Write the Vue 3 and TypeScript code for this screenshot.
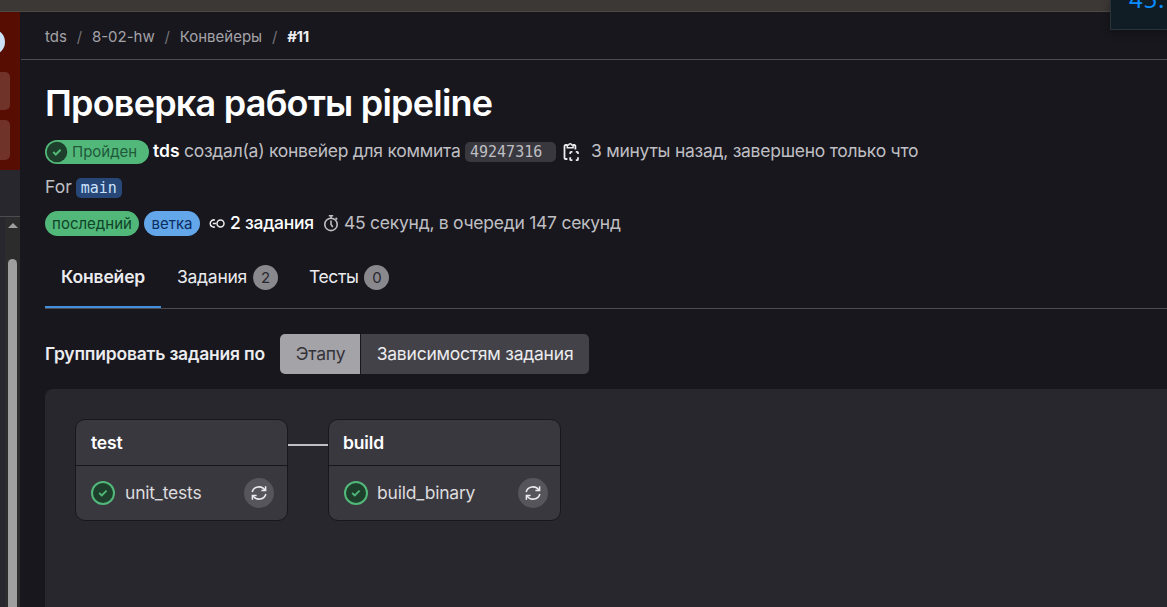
<script setup lang="ts">
interface Stage {
  name: string
  job: string
  width: number
}

const crumbs: string[] = ['tds', '8-02-hw', 'Конвейеры']
const tabs = [
  { label: 'Задания', count: 2 },
  { label: 'Тесты', count: 0 },
]
const stages: Stage[] = [
  { name: 'test', job: 'unit_tests', width: 213 },
  { name: 'build', job: 'build_binary', width: 233 },
]
</script>

<template>
  <div class="window">
    <div class="chrome"></div>
    <div class="floating">45.</div>
    <div class="body">
      <aside class="sidebar">
        <div class="brand">
          <span class="avatar"></span>
          <span class="tile"></span>
          <span class="tile"></span>
        </div>
        <div class="context"></div>
        <div class="scroll">
          <div class="track">
            <span class="arrow"></span>
            <span class="thumb"></span>
          </div>
        </div>
      </aside>
      <main class="main">
        <nav class="crumbs">
          <template v-for="crumb in crumbs" :key="crumb">
            <a>{{ crumb }}</a><span class="slash">/</span>
          </template>
          <b>#11</b>
        </nav>
        <div class="content">
          <h1>Проверка работы pipeline</h1>
          <div class="row summary">
            <span class="status">
              <svg width="24" height="24" viewBox="0 0 24 24">
                <circle cx="12" cy="12" r="10.3" fill="#1d3f2b" />
                <path d="M8.2 12l2.6 2.5 4.8-4.8" fill="none" stroke="#52b87a" stroke-width="2" />
              </svg>
              <span class="status-text">Пройден</span>
            </span>
            <b class="author">tds</b>
            <span class="created">создал(а) конвейер для коммита</span>
            <code class="sha">49247316</code>
            <svg class="copy" width="20" height="20" viewBox="0 0 20 20" fill="none" stroke="#ececef" stroke-width="1.8">
              <path d="M6.4 17H4.6a1.1 1.1 0 0 1-1.1-1.1V4.1A1.1 1.1 0 0 1 4.6 3H6M12 3h1.3a1.1 1.1 0 0 1 1.1 1.1v3.4" />
              <path d="M6.3 5.8V3.1h1.3a1.65 1.65 0 0 1 3.2 0h1.3v2.7z" stroke-width="1.5" />
              <path d="M11.4 9.9h-1.2a1 1 0 0 0-1 1v1.2M14.8 9.9H16a1 1 0 0 1 1 1v1.2M9.2 15.3v1.9a1 1 0 0 0 1 1h1.2M17 15.3v1.9a1 1 0 0 1-1 1h-1.2" />
            </svg>
            <span class="ago">3 минуты назад, завершено только что</span>
          </div>
          <div class="row ref"><span>For</span><code class="branch">main</code></div>
          <div class="row badges">
            <span class="badge latest">последний</span>
            <span class="badge kind">ветка</span>
            <svg class="jobs-icon" width="18" height="16" viewBox="0 0 18 16" fill="none" stroke="#ececef" stroke-width="1.5">
              <path d="M7 5.1A3.6 3.6 0 1 0 7 11.9M8.2 8.5H4.8" />
              <circle cx="12.5" cy="8.5" r="3.5" />
            </svg>
            <span class="jobs">2 задания</span>
            <svg class="timer" width="16" height="18" viewBox="0 0 16 18" fill="none" stroke="#bfbfc3" stroke-width="1.6">
              <circle cx="8" cy="10.4" r="6.2" />
              <path d="M8 6.6V10.4l1.8 2.6M5.8 1.8h4.4M8 1.8v2.4M12.6 3.9l1.6 1.6" />
            </svg>
            <span class="duration">45 секунд, в очереди 147 секунд</span>
          </div>
          <div class="tabs">
            <div class="tab active"><span>Конвейер</span></div>
            <div v-for="tab in tabs" :key="tab.label" class="tab">
              <span>{{ tab.label }}</span><span class="count">{{ tab.count }}</span>
            </div>
          </div>
          <div class="grouping">
            <b>Группировать задания по</b>
            <div class="segmented">
              <button class="selected"><span>Этапу</span></button>
              <button><span>Зависимостям задания</span></button>
            </div>
          </div>
          <section class="graph">
            <template v-for="(stage, i) in stages" :key="stage.name">
              <span v-if="i > 0" class="link"></span>
              <article class="stage" :style="{ width: stage.width + 'px' }">
                <header>{{ stage.name }}</header>
                <div class="job">
                  <svg width="24" height="24" viewBox="0 0 24 24" fill="none" stroke="#52b87a">
                    <circle cx="12" cy="12" r="11" fill="#1d3f2b" stroke-width="2" />
                    <path d="M8.2 12l2.6 2.5 4.8-4.8" stroke-width="1.8" />
                  </svg>
                  <span class="job-name">{{ stage.job }}</span>
                  <span class="retry">
                    <svg width="16" height="16" viewBox="0 0 16 16" fill="none" stroke="#ececef" stroke-width="1.5">
                      <path d="M1.2 7A6.8 6.2 0 0 1 13.9 5.2M14.8 9A6.8 6.2 0 0 1 2.1 10.8" />
                      <path d="M14.6 1.2v4.2h-4.2M1.4 14.8v-4.2h4.2" />
                    </svg>
                  </span>
                </div>
              </article>
            </template>
          </section>
        </div>
      </main>
    </div>
  </div>
</template>

<style>
body {
  background: #18171d;
  overflow: hidden;
}
</style>

<style scoped>
* {
  box-sizing: border-box;
}
.window {
  position: relative;
  display: flex;
  flex-direction: column;
  width: 1167px;
  height: 607px;
  overflow: hidden;
  background: #18171d;
  color: #bfbfc3;
  font: 17.5px/24px Inter, "Noto Sans", sans-serif;
  letter-spacing: -0.26px;
  white-space: nowrap;
}
svg {
  display: block;
  flex: none;
}
.chrome {
  flex: none;
  height: 12px;
  background: #3c3836;
  border-bottom: 1px solid #504843;
}
.floating {
  position: absolute;
  z-index: 2;
  top: -2px;
  right: -2px;
  width: 59px;
  height: 32px;
  padding-left: 18px;
  background: #111d24;
  border: 1px solid #29333a;
  color: #0a8cff;
  font: 24px/0px "Noto Sans", sans-serif;
  letter-spacing: 0.8px;
  box-shadow: 0 2px 8px rgba(0, 0, 0, 0.35);
}
.body {
  display: flex;
  flex: 1;
  min-height: 0;
}
.sidebar {
  display: flex;
  flex-direction: column;
  width: 20px;
  flex: none;
  overflow: hidden;
  background: #28272d;
}
.brand {
  display: flex;
  flex-direction: column;
  height: 158px;
  padding-top: 17px;
  background: #580d02;
}
.avatar {
  width: 26px;
  height: 26px;
  margin-left: -21px;
  border-radius: 50%;
  background: #cbe2f9;
}
.tile {
  width: 20px;
  height: 38px;
  margin: 17px 0 0 -10px;
  border-radius: 5px;
  background: #70332a;
}
.tile + .tile {
  margin-top: 10px;
  height: 40px;
}
.context {
  height: 47px;
  border-bottom: 1px solid #4c4b51;
}
.scroll {
  display: flex;
  flex: 1;
  padding-left: 5px;
}
.track {
  display: flex;
  flex-direction: column;
  align-items: center;
  width: 15px;
  padding-top: 6px;
  background: #2c2c2c;
}
.arrow {
  border: 5px solid transparent;
  border-top: 0;
  border-bottom-color: #9f9f9f;
}
.thumb {
  flex: 1;
  width: 9px;
  margin-top: 31px;
  border-radius: 5px 5px 0 0;
  background: #9f9f9f;
}
.main {
  flex: 1;
  min-width: 0;
  margin-left: 1px;
}
.crumbs {
  display: flex;
  align-items: center;
  height: 48px;
  padding: 2px 0 0 24px;
  border-bottom: 1px solid #4c4b51;
  color: #a4a3a8;
  font-size: 15px;
  letter-spacing: 0;
}
.crumbs b {
  color: #ececef;
  font-weight: 700;
  letter-spacing: -0.3px;
}
.slash {
  width: 25px;
  color: #737278;
  text-align: center;
}
.content {
  padding-left: 24px;
}
h1 {
  height: 44px;
  margin: 21px 0 15px;
  color: #fff;
  font-size: 36px;
  font-weight: 600;
  line-height: 44px;
  letter-spacing: -0.79px;
}
.row {
  display: flex;
  align-items: center;
  height: 24px;
}
.status {
  display: flex;
  align-items: center;
  width: 104px;
  height: 24px;
  border-radius: 12px;
  background: #52b87a;
  color: #20593a;
}
.status-text {
  margin-left: 3px;
  font-size: 15px;
  letter-spacing: 0;
}
.author {
  width: 31px;
  margin: -2px 0 0 4px;
  color: #fff;
  font-weight: 600;
  letter-spacing: 0;
}
.created {
  width: 281px;
  margin-top: -2px;
}
code {
  font-family: "DejaVu Sans Mono", monospace;
  font-size: 15px;
  line-height: 20px;
  letter-spacing: 0;
  border-radius: 5px;
}
.sha {
  width: 91px;
  padding-left: 5px;
  background: #3a383f;
}
.copy {
  margin: 0 0 0 5px;
}
.ago {
  margin: -2px 0 0 10px;
}
.ref {
  margin-top: 12px;
}
.ref span {
  margin-top: -2px;
  letter-spacing: 0;
}
.branch {
  width: 46px;
  margin-left: 4px;
  padding-left: 5px;
  background: #284779;
  color: #cbe2f9;
}
.badges {
  margin-top: 11px;
}
.badge {
  height: 25px;
  border-radius: 13px;
  font-size: 15px;
  line-height: 25px;
  letter-spacing: 0;
  text-align: center;
}
.latest {
  width: 94px;
  background: #52b87a;
  color: #0e4328;
}
.kind {
  width: 56px;
  margin-left: 5px;
  background: #63a6e9;
  color: #0b2e62;
}
.jobs-icon {
  margin-left: 8px;
}
.jobs {
  width: 84px;
  margin-left: 4px;
  color: #fff;
  font-weight: 500;
}
.timer {
  margin-left: 9px;
}
.duration {
  margin-left: 5px;
}
.tabs {
  display: flex;
  height: 62px;
  margin-top: 12px;
  border-bottom: 1px solid #4c4b51;
  color: #ececef;
}
.tab {
  display: flex;
  align-items: center;
  height: 61px;
  padding: 0 16px 1px;
}
.active {
  width: 116px;
  border-bottom: 2px solid #428fdc;
  border-top: 2px solid transparent;
  font-weight: 600;
  letter-spacing: -0.15px;
}
.tab:last-child {
  padding-left: 15px;
  letter-spacing: -0.4px;
}
.count {
  width: 25px;
  height: 25px;
  margin-left: 6px;
  border-radius: 50%;
  background: #89888d;
  color: #28272d;
  font-size: 15px;
  line-height: 25px;
  letter-spacing: 0;
  text-align: center;
}
.grouping {
  display: flex;
  align-items: center;
  height: 40px;
  margin-top: 25px;
}
.grouping b {
  width: 235px;
  color: #ececef;
  font-weight: 600;
  letter-spacing: -0.2px;
}
.segmented {
  display: flex;
  gap: 1px;
  width: 309px;
  border-radius: 5px;
  overflow: hidden;
}
button {
  flex: 1;
  height: 40px;
  padding: 0;
  border: 0;
  background: #434248;
  color: #ececef;
  font: inherit;
  letter-spacing: -0.22px;
}
button.selected {
  flex: none;
  width: 80px;
  padding-left: 1px;
  background: #a4a3a8;
  color: #333238;
}
.graph {
  display: flex;
  align-items: flex-start;
  height: 240px;
  margin-top: 15px;
  padding: 30px;
  border-radius: 8px 0 0 0;
  background: #28272d;
}
.stage {
  height: 102px;
  border: 1px solid #18171d;
  border-radius: 10px;
  background: #3a383f;
}
.stage header {
  height: 46px;
  padding: 0 15px;
  border-bottom: 1px solid #18171d;
  color: #fff;
  font-weight: 600;
  line-height: 46px;
  letter-spacing: -0.15px;
}
.stage:last-child header {
  padding-left: 14px;
}
.job {
  display: flex;
  align-items: center;
  height: 54px;
  padding: 0 13px 0 15px;
  color: #dcdcde;
  letter-spacing: -0.2px;
}
.stage:last-child .job {
  padding-right: 12px;
}
.job-name {
  flex: 1;
  margin-left: 10px;
}
.stage:last-child .job-name {
  margin-left: 9px;
}
.retry {
  display: grid;
  place-items: center;
  width: 30px;
  height: 30px;
  border-radius: 50%;
  background: #57555c;
}
.link {
  width: 40px;
  height: 2px;
  margin-top: 25px;
  background: #bfbfc3;
}
</style>
